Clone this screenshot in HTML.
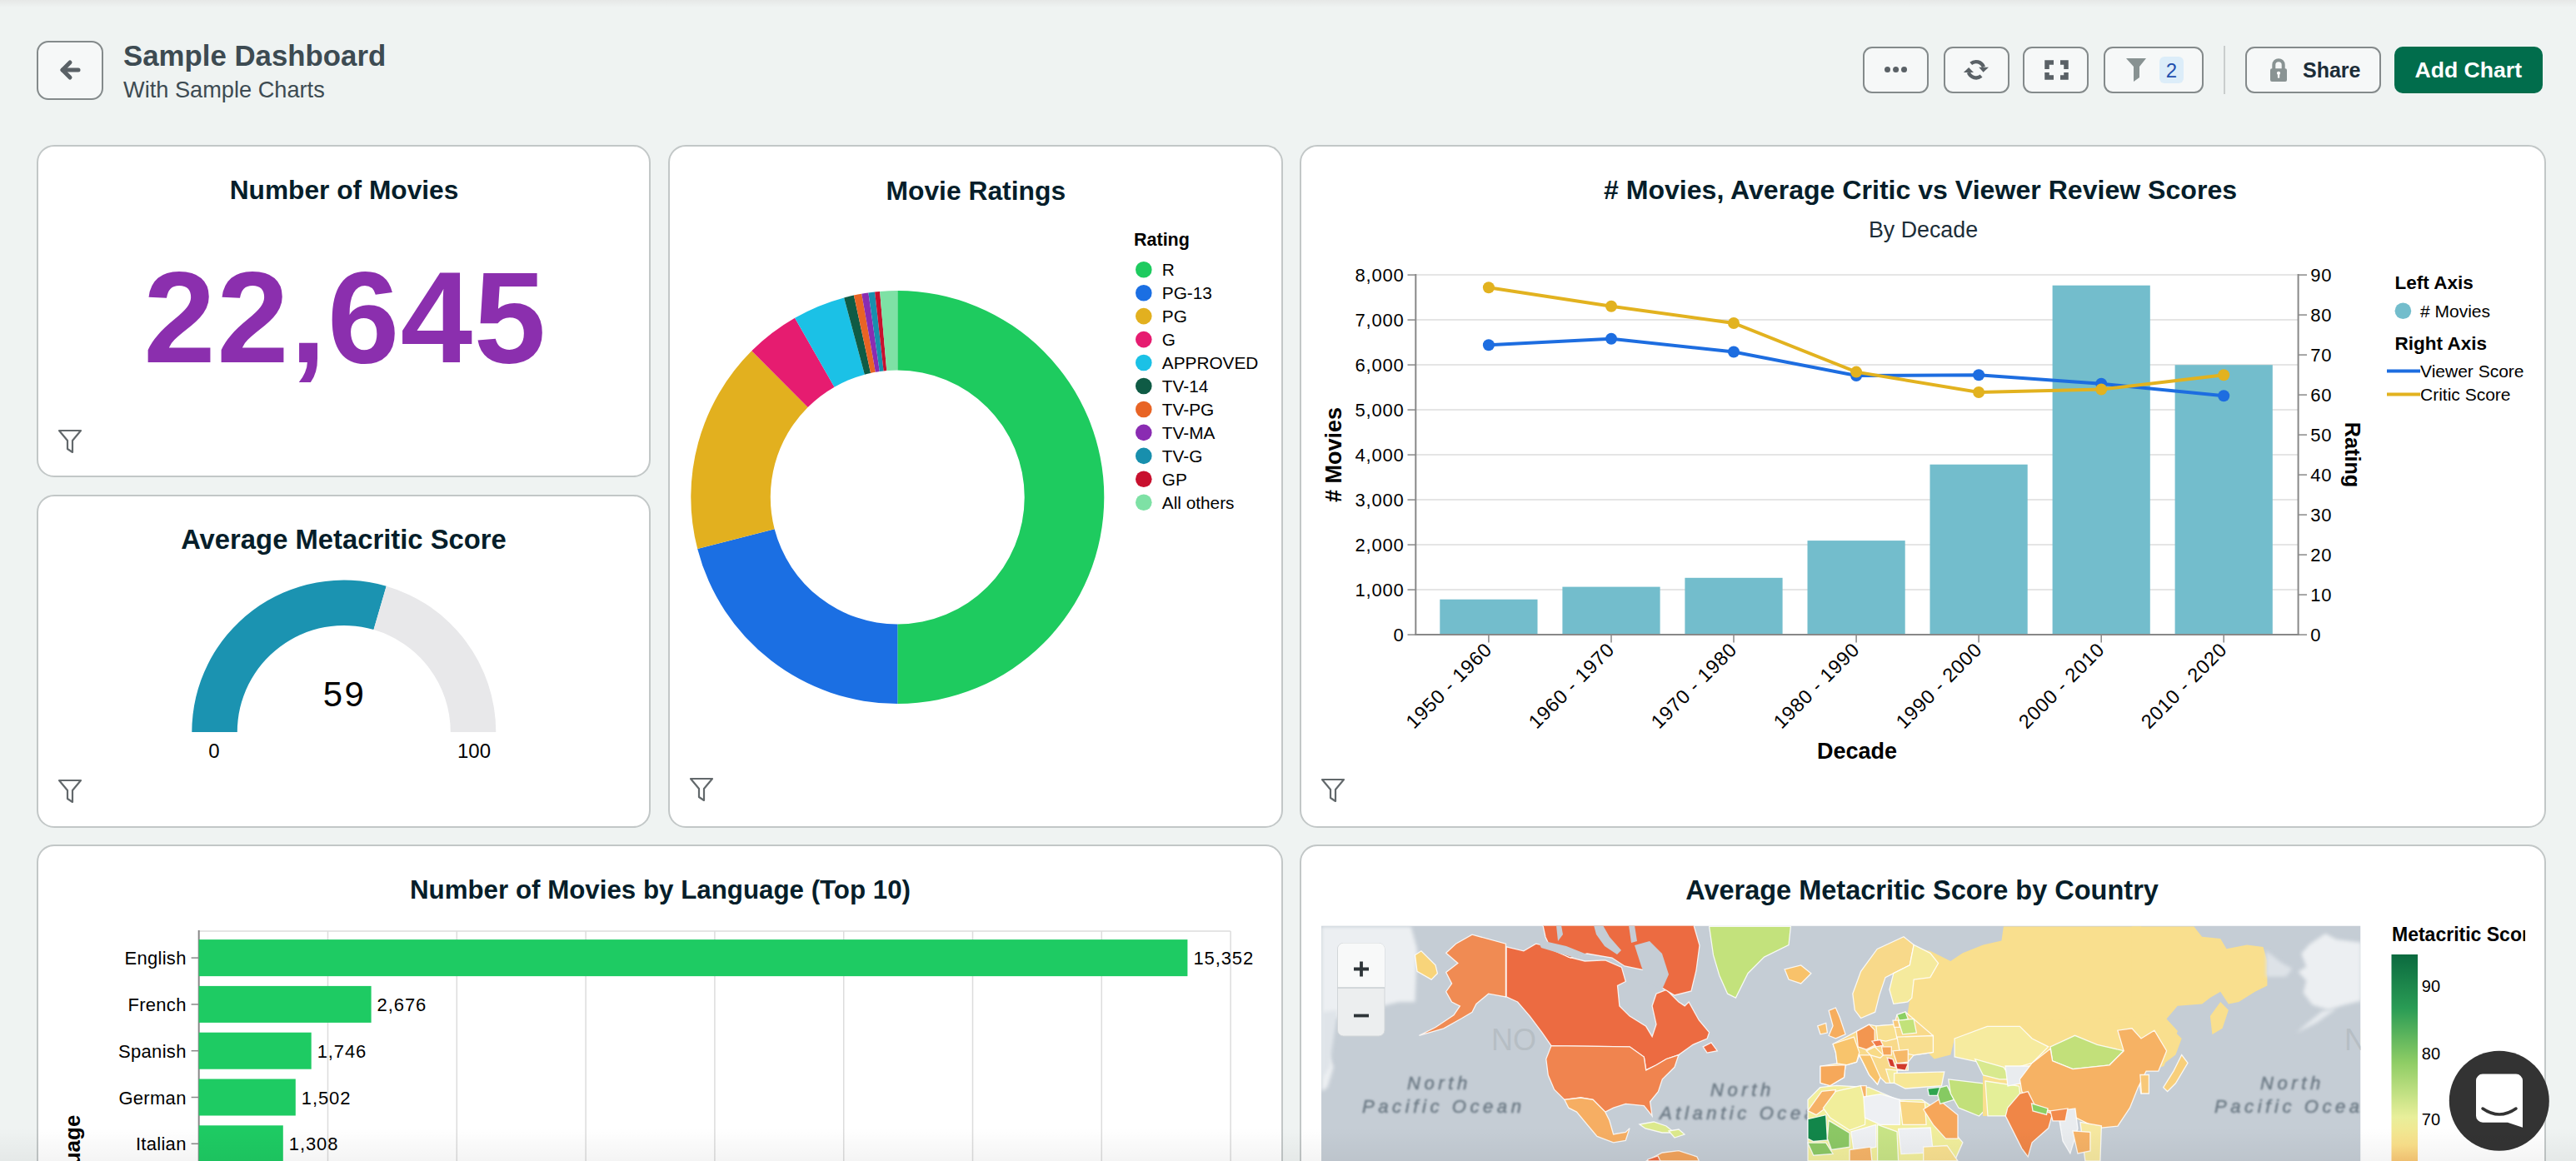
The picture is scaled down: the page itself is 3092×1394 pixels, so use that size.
<!DOCTYPE html>
<html><head><meta charset="utf-8"><title>Sample Dashboard</title>
<style>
html,body{margin:0;padding:0;}
body{width:3092px;height:1394px;overflow:hidden;background:#eff3f2;position:relative;font-family:"Liberation Sans",sans-serif;}
.topshade{position:absolute;left:0;top:0;width:3092px;height:9px;background:linear-gradient(#e6e8e7,#eff3f2);}
.card{position:absolute;background:#fff;border:2px solid #c2c7c7;border-radius:21px;box-sizing:border-box;}
.btn{position:absolute;box-sizing:border-box;border:2px solid #848a8b;border-radius:11px;background:#f6f8f8;}
svg.ov{position:absolute;left:0;top:0;}
</style></head><body>
<div class="topshade"></div>

<div class="btn" style="left:44px;top:49px;width:80px;height:71px;border-radius:14px;"></div>
<div style="position:absolute;left:148px;top:47px;font-size:34.8px;font-weight:bold;color:#3d4b52;white-space:nowrap;line-height:40px;">Sample Dashboard</div>
<div style="position:absolute;left:148px;top:91.7px;font-size:27.2px;color:#3d4b52;white-space:nowrap;line-height:32px;">With Sample Charts</div>
<div class="btn" style="left:2236px;top:56px;width:79px;height:56px;"></div>
<div class="btn" style="left:2333px;top:56px;width:79px;height:56px;"></div>
<div class="btn" style="left:2428px;top:56px;width:79px;height:56px;"></div>
<div class="btn" style="left:2525px;top:56px;width:120px;height:56px;"></div>
<div class="btn" style="left:2695px;top:56px;width:163px;height:56px;"></div>
<div style="position:absolute;left:2669px;top:55px;width:2px;height:58px;background:#c9cdcd;"></div>
<div style="position:absolute;left:2874px;top:56px;width:178px;height:56px;border-radius:10px;background:#016d4c;"></div>
<div style="position:absolute;left:2592px;top:68px;width:29px;height:32px;border-radius:6px;background:#dcedf9;"></div>
<div class="card" style="left:44px;top:174px;width:737px;height:399px;"></div>
<div class="card" style="left:44px;top:594px;width:737px;height:400px;"></div>
<div class="card" style="left:802px;top:174px;width:738px;height:820px;"></div>
<div class="card" style="left:1560px;top:174px;width:1496px;height:820px;"></div>
<div class="card" style="left:44px;top:1014px;width:1496px;height:500px;"></div>
<div class="card" style="left:1560px;top:1014px;width:1496px;height:500px;"></div>
<svg class="ov" width="3092" height="1394" font-family='"Liberation Sans", sans-serif'>
<path d="M75,84 L94,84" stroke="#5a6166" stroke-width="5" stroke-linecap="round" fill="none"/>
<path d="M84,75 L75,84 L84,93" stroke="#5a6166" stroke-width="5" stroke-linecap="round" stroke-linejoin="round" fill="none"/>
<circle cx="2265.5" cy="83.5" r="3.5" fill="#5a6166"/>
<circle cx="2275.6" cy="83.5" r="3.5" fill="#5a6166"/>
<circle cx="2285.5" cy="83.5" r="3.5" fill="#5a6166"/>
<path d="M2365.7,76.4 A9.6,9.6 0 0 1 2380.9,80.5" stroke="#5a6166" stroke-width="4.4" fill="none"/>
<path d="M2375.2,80.8 L2387,80.8 L2380.6,86.8 Z" fill="#5a6166"/>
<path d="M2378.1,91.15 A9.6,9.6 0 0 1 2362.9,87.1" stroke="#5a6166" stroke-width="4.4" fill="none"/>
<path d="M2356.9,87 L2369,87 L2363.1,81 Z" fill="#5a6166"/>
<path d="M2457,83 L2457,75 L2465,75 M2473,75 L2480,75 L2480,83 M2480,87 L2480,93 L2473,93 M2465,93 L2457,93 L2457,87" stroke="#5a6166" stroke-width="5.5" fill="none"/>
<path d="M2552,70 L2576,70 L2568,80 L2568,93 L2561,98 L2561,80 Z" fill="#889292"/>
<text x="2606.5" y="93" font-size="24" fill="#1f4fae" font-weight="normal" text-anchor="middle" >2</text>
<path d="M2729.3,83 L2729.3,77.8 A5.7,5.7 0 0 1 2740.7,77.8 L2740.7,83" stroke="#899393" stroke-width="4" fill="none"/>
<rect x="2725" y="82.3" width="20" height="15.7" rx="2" fill="#899393"/>
<circle cx="2735" cy="87.8" r="2.1" fill="#ffffff"/><rect x="2733.9" y="88" width="2.3" height="5.6" fill="#ffffff"/>
<text x="2764" y="93" font-size="25" fill="#1c2d38" font-weight="bold" text-anchor="start" >Share</text>
<text x="2898.5" y="93.2" font-size="26.6" fill="#ffffff" font-weight="bold" text-anchor="start" >Add Chart</text>
<path d="M71,517 L97,517 L87,529 L87,543 L81,539 L81,529 Z" stroke="#62686b" stroke-width="2.2" stroke-linejoin="round" fill="none"/>
<path d="M71,937 L97,937 L87,949 L87,963 L81,959 L81,949 Z" stroke="#62686b" stroke-width="2.2" stroke-linejoin="round" fill="none"/>
<path d="M829,935 L855,935 L845,947 L845,961 L839,957 L839,947 Z" stroke="#62686b" stroke-width="2.2" stroke-linejoin="round" fill="none"/>
<path d="M1587,936 L1613,936 L1603,948 L1603,962 L1597,958 L1597,948 Z" stroke="#62686b" stroke-width="2.2" stroke-linejoin="round" fill="none"/>
<text x="413" y="239" font-size="31.7" fill="#061e2a" font-weight="bold" text-anchor="middle" >Number of Movies</text>
<text x="414.5" y="435.2" font-size="155.3" fill="#8b2fae" font-weight="bold" text-anchor="middle" letter-spacing="1.6">22,645</text>
<text x="412.5" y="659" font-size="32.8" fill="#061e2a" font-weight="bold" text-anchor="middle" >Average Metacritic Score</text>
<path d="M230.30,879.00 A182.5,182.5 0 0 1 463.72,703.75 L448.51,756.08 A128,128 0 0 0 284.80,879.00 Z" fill="#1b93b1"/>
<path d="M463.72,703.75 A182.5,182.5 0 0 1 595.30,879.00 L540.80,879.00 A128,128 0 0 0 448.51,756.08 Z" fill="#e8e8ea"/>
<text x="413.5" y="848" font-size="42" fill="#000" font-weight="normal" text-anchor="middle" letter-spacing="2.5">59</text>
<text x="257" y="909.5" font-size="24" fill="#000" font-weight="normal" text-anchor="middle" >0</text>
<text x="569" y="909.5" font-size="24" fill="#000" font-weight="normal" text-anchor="middle" >100</text>
<text x="1171.3" y="239.5" font-size="31.8" fill="#061e2a" font-weight="bold" text-anchor="middle" >Movie Ratings</text>
<path d="M1077.30,349.00 A248,248 0 0 1 1077.30,845.00 L1077.30,749.50 A152.5,152.5 0 0 0 1077.30,444.50 Z" fill="#1ecb5f"/>
<path d="M1077.30,845.00 A248,248 0 0 1 837.20,659.09 L929.66,635.18 A152.5,152.5 0 0 0 1077.30,749.50 Z" fill="#1b6fe3"/>
<path d="M837.20,659.09 A248,248 0 0 1 902.24,421.33 L969.65,488.98 A152.5,152.5 0 0 0 929.66,635.18 Z" fill="#e2b01f"/>
<path d="M902.24,421.33 A248,248 0 0 1 954.05,381.79 L1001.51,464.67 A152.5,152.5 0 0 0 969.65,488.98 Z" fill="#e61c70"/>
<path d="M954.05,381.79 A248,248 0 0 1 1013.11,357.45 L1037.83,449.70 A152.5,152.5 0 0 0 1001.51,464.67 Z" fill="#1bc1e6"/>
<path d="M1013.11,357.45 A248,248 0 0 1 1024.89,354.60 L1045.07,447.94 A152.5,152.5 0 0 0 1037.83,449.70 Z" fill="#0f5b45"/>
<path d="M1024.89,354.60 A248,248 0 0 1 1034.24,352.77 L1050.82,446.82 A152.5,152.5 0 0 0 1045.07,447.94 Z" fill="#e86425"/>
<path d="M1034.24,352.77 A248,248 0 0 1 1042.36,351.47 L1055.81,446.02 A152.5,152.5 0 0 0 1050.82,446.82 Z" fill="#8a2cb2"/>
<path d="M1042.36,351.47 A248,248 0 0 1 1050.09,350.50 L1060.57,445.42 A152.5,152.5 0 0 0 1055.81,446.02 Z" fill="#188fad"/>
<path d="M1050.09,350.50 A248,248 0 0 1 1056.12,349.91 L1064.27,445.06 A152.5,152.5 0 0 0 1060.57,445.42 Z" fill="#c8102e"/>
<path d="M1056.12,349.91 A248,248 0 0 1 1077.30,349.00 L1077.30,444.50 A152.5,152.5 0 0 0 1064.27,445.06 Z" fill="#7ee1a5"/>
<text x="1361" y="295" font-size="21.5" fill="#000" font-weight="bold" text-anchor="start" >Rating</text>
<circle cx="1372.8" cy="323.7" r="9.8" fill="#1ecb5f"/>
<text x="1394.8" y="331.0" font-size="20.8" fill="#000" font-weight="normal" text-anchor="start" >R</text>
<circle cx="1372.8" cy="351.7" r="9.8" fill="#1b6fe3"/>
<text x="1394.8" y="359.0" font-size="20.8" fill="#000" font-weight="normal" text-anchor="start" >PG-13</text>
<circle cx="1372.8" cy="379.6" r="9.8" fill="#e2b01f"/>
<text x="1394.8" y="386.9" font-size="20.8" fill="#000" font-weight="normal" text-anchor="start" >PG</text>
<circle cx="1372.8" cy="407.6" r="9.8" fill="#e61c70"/>
<text x="1394.8" y="414.9" font-size="20.8" fill="#000" font-weight="normal" text-anchor="start" >G</text>
<circle cx="1372.8" cy="435.5" r="9.8" fill="#1bc1e6"/>
<text x="1394.8" y="442.8" font-size="20.8" fill="#000" font-weight="normal" text-anchor="start" >APPROVED</text>
<circle cx="1372.8" cy="463.5" r="9.8" fill="#0f5b45"/>
<text x="1394.8" y="470.8" font-size="20.8" fill="#000" font-weight="normal" text-anchor="start" >TV-14</text>
<circle cx="1372.8" cy="491.5" r="9.8" fill="#e86425"/>
<text x="1394.8" y="498.8" font-size="20.8" fill="#000" font-weight="normal" text-anchor="start" >TV-PG</text>
<circle cx="1372.8" cy="519.4" r="9.8" fill="#8a2cb2"/>
<text x="1394.8" y="526.7" font-size="20.8" fill="#000" font-weight="normal" text-anchor="start" >TV-MA</text>
<circle cx="1372.8" cy="547.4" r="9.8" fill="#188fad"/>
<text x="1394.8" y="554.7" font-size="20.8" fill="#000" font-weight="normal" text-anchor="start" >TV-G</text>
<circle cx="1372.8" cy="575.3" r="9.8" fill="#c8102e"/>
<text x="1394.8" y="582.6" font-size="20.8" fill="#000" font-weight="normal" text-anchor="start" >GP</text>
<circle cx="1372.8" cy="603.3" r="9.8" fill="#7ee1a5"/>
<text x="1394.8" y="610.6" font-size="20.8" fill="#000" font-weight="normal" text-anchor="start" >All others</text>
<text x="2305" y="239.2" font-size="32.1" fill="#061e2a" font-weight="bold" text-anchor="middle" ># Movies, Average Critic vs Viewer Review Scores</text>
<text x="2308.5" y="284.7" font-size="26.8" fill="#1c2d38" font-weight="normal" text-anchor="middle" >By Decade</text>
<line x1="1689.5" y1="762.1" x2="1699.3" y2="762.1" stroke="#888" stroke-width="1.5"/>
<text x="1685.5" y="769.9" font-size="22" fill="#000" font-weight="normal" text-anchor="end" letter-spacing="0.8">0</text>
<line x1="1699.3" y1="708.1" x2="2758.6" y2="708.1" stroke="#dcdcdc" stroke-width="1.5"/>
<line x1="1689.5" y1="708.1" x2="1699.3" y2="708.1" stroke="#888" stroke-width="1.5"/>
<text x="1685.5" y="715.9" font-size="22" fill="#000" font-weight="normal" text-anchor="end" letter-spacing="0.8">1,000</text>
<line x1="1699.3" y1="654.1" x2="2758.6" y2="654.1" stroke="#dcdcdc" stroke-width="1.5"/>
<line x1="1689.5" y1="654.1" x2="1699.3" y2="654.1" stroke="#888" stroke-width="1.5"/>
<text x="1685.5" y="661.9" font-size="22" fill="#000" font-weight="normal" text-anchor="end" letter-spacing="0.8">2,000</text>
<line x1="1699.3" y1="600.1" x2="2758.6" y2="600.1" stroke="#dcdcdc" stroke-width="1.5"/>
<line x1="1689.5" y1="600.1" x2="1699.3" y2="600.1" stroke="#888" stroke-width="1.5"/>
<text x="1685.5" y="607.9" font-size="22" fill="#000" font-weight="normal" text-anchor="end" letter-spacing="0.8">3,000</text>
<line x1="1699.3" y1="546.1" x2="2758.6" y2="546.1" stroke="#dcdcdc" stroke-width="1.5"/>
<line x1="1689.5" y1="546.1" x2="1699.3" y2="546.1" stroke="#888" stroke-width="1.5"/>
<text x="1685.5" y="553.9" font-size="22" fill="#000" font-weight="normal" text-anchor="end" letter-spacing="0.8">4,000</text>
<line x1="1699.3" y1="492.1" x2="2758.6" y2="492.1" stroke="#dcdcdc" stroke-width="1.5"/>
<line x1="1689.5" y1="492.1" x2="1699.3" y2="492.1" stroke="#888" stroke-width="1.5"/>
<text x="1685.5" y="499.9" font-size="22" fill="#000" font-weight="normal" text-anchor="end" letter-spacing="0.8">5,000</text>
<line x1="1699.3" y1="438.1" x2="2758.6" y2="438.1" stroke="#dcdcdc" stroke-width="1.5"/>
<line x1="1689.5" y1="438.1" x2="1699.3" y2="438.1" stroke="#888" stroke-width="1.5"/>
<text x="1685.5" y="445.9" font-size="22" fill="#000" font-weight="normal" text-anchor="end" letter-spacing="0.8">6,000</text>
<line x1="1699.3" y1="384.1" x2="2758.6" y2="384.1" stroke="#dcdcdc" stroke-width="1.5"/>
<line x1="1689.5" y1="384.1" x2="1699.3" y2="384.1" stroke="#888" stroke-width="1.5"/>
<text x="1685.5" y="391.9" font-size="22" fill="#000" font-weight="normal" text-anchor="end" letter-spacing="0.8">7,000</text>
<line x1="1699.3" y1="330.1" x2="2758.6" y2="330.1" stroke="#dcdcdc" stroke-width="1.5"/>
<line x1="1689.5" y1="330.1" x2="1699.3" y2="330.1" stroke="#888" stroke-width="1.5"/>
<text x="1685.5" y="337.9" font-size="22" fill="#000" font-weight="normal" text-anchor="end" letter-spacing="0.8">8,000</text>
<line x1="2758.6" y1="762.1" x2="2769" y2="762.1" stroke="#888" stroke-width="1.5"/>
<text x="2773.3" y="769.9" font-size="22" fill="#000" font-weight="normal" text-anchor="start" letter-spacing="0.8">0</text>
<line x1="2758.6" y1="714.1" x2="2769" y2="714.1" stroke="#888" stroke-width="1.5"/>
<text x="2773.3" y="721.9" font-size="22" fill="#000" font-weight="normal" text-anchor="start" letter-spacing="0.8">10</text>
<line x1="2758.6" y1="666.1" x2="2769" y2="666.1" stroke="#888" stroke-width="1.5"/>
<text x="2773.3" y="673.9" font-size="22" fill="#000" font-weight="normal" text-anchor="start" letter-spacing="0.8">20</text>
<line x1="2758.6" y1="618.1" x2="2769" y2="618.1" stroke="#888" stroke-width="1.5"/>
<text x="2773.3" y="625.9" font-size="22" fill="#000" font-weight="normal" text-anchor="start" letter-spacing="0.8">30</text>
<line x1="2758.6" y1="570.1" x2="2769" y2="570.1" stroke="#888" stroke-width="1.5"/>
<text x="2773.3" y="577.9" font-size="22" fill="#000" font-weight="normal" text-anchor="start" letter-spacing="0.8">40</text>
<line x1="2758.6" y1="522.1" x2="2769" y2="522.1" stroke="#888" stroke-width="1.5"/>
<text x="2773.3" y="529.9" font-size="22" fill="#000" font-weight="normal" text-anchor="start" letter-spacing="0.8">50</text>
<line x1="2758.6" y1="474.1" x2="2769" y2="474.1" stroke="#888" stroke-width="1.5"/>
<text x="2773.3" y="481.9" font-size="22" fill="#000" font-weight="normal" text-anchor="start" letter-spacing="0.8">60</text>
<line x1="2758.6" y1="426.1" x2="2769" y2="426.1" stroke="#888" stroke-width="1.5"/>
<text x="2773.3" y="433.9" font-size="22" fill="#000" font-weight="normal" text-anchor="start" letter-spacing="0.8">70</text>
<line x1="2758.6" y1="378.1" x2="2769" y2="378.1" stroke="#888" stroke-width="1.5"/>
<text x="2773.3" y="385.9" font-size="22" fill="#000" font-weight="normal" text-anchor="start" letter-spacing="0.8">80</text>
<line x1="2758.6" y1="330.1" x2="2769" y2="330.1" stroke="#888" stroke-width="1.5"/>
<text x="2773.3" y="337.9" font-size="22" fill="#000" font-weight="normal" text-anchor="start" letter-spacing="0.8">90</text>
<rect x="1728.3" y="719.7" width="117.2" height="42.4" fill="#73bdcc"/>
<line x1="1786.9" y1="762.1" x2="1786.9" y2="771.6" stroke="#888" stroke-width="1.5"/>
<text transform="translate(1787.9,777) rotate(-45)" font-size="23.5" letter-spacing="0.8" text-anchor="end" dominant-baseline="middle" fill="#000">1950 - 1960</text>
<rect x="1875.4" y="704.6" width="117.2" height="57.5" fill="#73bdcc"/>
<line x1="1934.0" y1="762.1" x2="1934.0" y2="771.6" stroke="#888" stroke-width="1.5"/>
<text transform="translate(1935.0,777) rotate(-45)" font-size="23.5" letter-spacing="0.8" text-anchor="end" dominant-baseline="middle" fill="#000">1960 - 1970</text>
<rect x="2022.4" y="693.8" width="117.2" height="68.3" fill="#73bdcc"/>
<line x1="2081.0" y1="762.1" x2="2081.0" y2="771.6" stroke="#888" stroke-width="1.5"/>
<text transform="translate(2082.0,777) rotate(-45)" font-size="23.5" letter-spacing="0.8" text-anchor="end" dominant-baseline="middle" fill="#000">1970 - 1980</text>
<rect x="2169.5" y="649.1" width="117.2" height="113.0" fill="#73bdcc"/>
<line x1="2228.1" y1="762.1" x2="2228.1" y2="771.6" stroke="#888" stroke-width="1.5"/>
<text transform="translate(2229.1,777) rotate(-45)" font-size="23.5" letter-spacing="0.8" text-anchor="end" dominant-baseline="middle" fill="#000">1980 - 1990</text>
<rect x="2316.5" y="557.7" width="117.2" height="204.4" fill="#73bdcc"/>
<line x1="2375.1" y1="762.1" x2="2375.1" y2="771.6" stroke="#888" stroke-width="1.5"/>
<text transform="translate(2376.1,777) rotate(-45)" font-size="23.5" letter-spacing="0.8" text-anchor="end" dominant-baseline="middle" fill="#000">1990 - 2000</text>
<rect x="2463.6" y="342.7" width="117.2" height="419.4" fill="#73bdcc"/>
<line x1="2522.2" y1="762.1" x2="2522.2" y2="771.6" stroke="#888" stroke-width="1.5"/>
<text transform="translate(2523.2,777) rotate(-45)" font-size="23.5" letter-spacing="0.8" text-anchor="end" dominant-baseline="middle" fill="#000">2000 - 2010</text>
<rect x="2610.6" y="438.2" width="117.2" height="323.9" fill="#73bdcc"/>
<line x1="2669.2" y1="762.1" x2="2669.2" y2="771.6" stroke="#888" stroke-width="1.5"/>
<text transform="translate(2670.2,777) rotate(-45)" font-size="23.5" letter-spacing="0.8" text-anchor="end" dominant-baseline="middle" fill="#000">2010 - 2020</text>
<line x1="1699.3" y1="329" x2="1699.3" y2="763.1" stroke="#888" stroke-width="2"/>
<line x1="2758.6" y1="329" x2="2758.6" y2="763.1" stroke="#888" stroke-width="2"/>
<line x1="1698.3" y1="762.1" x2="2759.6" y2="762.1" stroke="#888" stroke-width="2"/>
<polyline points="1786.9,414.2 1934.0,406.7 2081.0,422.5 2228.1,451 2375.1,450.3 2522.2,460.7 2669.2,475.3" stroke="#1d6de0" stroke-width="4" fill="none"/>
<circle cx="1786.9" cy="414.2" r="7" fill="#1d6de0"/>
<circle cx="1934.0" cy="406.7" r="7" fill="#1d6de0"/>
<circle cx="2081.0" cy="422.5" r="7" fill="#1d6de0"/>
<circle cx="2228.1" cy="451" r="7" fill="#1d6de0"/>
<circle cx="2375.1" cy="450.3" r="7" fill="#1d6de0"/>
<circle cx="2522.2" cy="460.7" r="7" fill="#1d6de0"/>
<circle cx="2669.2" cy="475.3" r="7" fill="#1d6de0"/>
<polyline points="1786.9,345.3 1934.0,367.7 2081.0,388 2228.1,446.6 2375.1,471 2522.2,467.5 2669.2,450.3" stroke="#e2b21f" stroke-width="4" fill="none"/>
<circle cx="1786.9" cy="345.3" r="7" fill="#e2b21f"/>
<circle cx="1934.0" cy="367.7" r="7" fill="#e2b21f"/>
<circle cx="2081.0" cy="388" r="7" fill="#e2b21f"/>
<circle cx="2228.1" cy="446.6" r="7" fill="#e2b21f"/>
<circle cx="2375.1" cy="471" r="7" fill="#e2b21f"/>
<circle cx="2522.2" cy="467.5" r="7" fill="#e2b21f"/>
<circle cx="2669.2" cy="450.3" r="7" fill="#e2b21f"/>
<text transform="translate(1610,546) rotate(-90)" font-size="27" font-weight="bold" text-anchor="middle" fill="#000">#&#160;Movies</text>
<text transform="translate(2815,546) rotate(90)" font-size="25.2" font-weight="bold" text-anchor="middle" fill="#000">Rating</text>
<text x="2229" y="911" font-size="27" fill="#000" font-weight="bold" text-anchor="middle" >Decade</text>
<text x="2874.5" y="347.4" font-size="22.5" fill="#000" font-weight="bold" text-anchor="start" >Left Axis</text>
<circle cx="2884.4" cy="373.2" r="9.8" fill="#73bdcc"/>
<text x="2905" y="380.5" font-size="21" fill="#000" font-weight="normal" text-anchor="start" ># Movies</text>
<text x="2874.5" y="419.7" font-size="22.5" fill="#000" font-weight="bold" text-anchor="start" >Right Axis</text>
<line x1="2865" y1="445.6" x2="2905" y2="445.6" stroke="#1d6de0" stroke-width="4"/>
<text x="2905" y="453" font-size="21" fill="#000" font-weight="normal" text-anchor="start" >Viewer Score</text>
<line x1="2865" y1="473.6" x2="2905" y2="473.6" stroke="#e2b21f" stroke-width="4"/>
<text x="2905" y="481" font-size="21" fill="#000" font-weight="normal" text-anchor="start" >Critic Score</text>
<text x="792.5" y="1079" font-size="31.3" fill="#061e2a" font-weight="bold" text-anchor="middle" >Number of Movies by Language (Top 10)</text>
<line x1="393.5" y1="1118" x2="393.5" y2="1400" stroke="#dcdcdc" stroke-width="1.5"/>
<line x1="548.3" y1="1118" x2="548.3" y2="1400" stroke="#dcdcdc" stroke-width="1.5"/>
<line x1="703.1" y1="1118" x2="703.1" y2="1400" stroke="#dcdcdc" stroke-width="1.5"/>
<line x1="857.9" y1="1118" x2="857.9" y2="1400" stroke="#dcdcdc" stroke-width="1.5"/>
<line x1="1012.7" y1="1118" x2="1012.7" y2="1400" stroke="#dcdcdc" stroke-width="1.5"/>
<line x1="1167.5" y1="1118" x2="1167.5" y2="1400" stroke="#dcdcdc" stroke-width="1.5"/>
<line x1="1322.3" y1="1118" x2="1322.3" y2="1400" stroke="#dcdcdc" stroke-width="1.5"/>
<line x1="1477.1" y1="1118" x2="1477.1" y2="1400" stroke="#dcdcdc" stroke-width="1.5"/>
<line x1="238.7" y1="1118" x2="1476.9" y2="1118" stroke="#dcdcdc" stroke-width="1.5"/>
<line x1="238.7" y1="1117" x2="238.7" y2="1400" stroke="#888" stroke-width="2"/>
<rect x="238.7" y="1128.1" width="1186.7" height="44" fill="#1ecb63"/>
<line x1="229.6" y1="1150.1" x2="238.7" y2="1150.1" stroke="#888" stroke-width="1.5"/>
<text x="223.7" y="1158.1" font-size="22" fill="#000" font-weight="normal" text-anchor="end" letter-spacing="0.3">English</text>
<text x="1432.4" y="1158.1" font-size="22" fill="#000" font-weight="normal" text-anchor="start" letter-spacing="0.9">15,352</text>
<rect x="238.7" y="1183.9" width="206.9" height="44" fill="#1ecb63"/>
<line x1="229.6" y1="1205.9" x2="238.7" y2="1205.9" stroke="#888" stroke-width="1.5"/>
<text x="223.7" y="1213.9" font-size="22" fill="#000" font-weight="normal" text-anchor="end" letter-spacing="0.3">French</text>
<text x="452.6" y="1213.9" font-size="22" fill="#000" font-weight="normal" text-anchor="start" letter-spacing="0.9">2,676</text>
<rect x="238.7" y="1239.7" width="135.0" height="44" fill="#1ecb63"/>
<line x1="229.6" y1="1261.7" x2="238.7" y2="1261.7" stroke="#888" stroke-width="1.5"/>
<text x="223.7" y="1269.7" font-size="22" fill="#000" font-weight="normal" text-anchor="end" letter-spacing="0.3">Spanish</text>
<text x="380.7" y="1269.7" font-size="22" fill="#000" font-weight="normal" text-anchor="start" letter-spacing="0.9">1,746</text>
<rect x="238.7" y="1295.5" width="116.1" height="44" fill="#1ecb63"/>
<line x1="229.6" y1="1317.5" x2="238.7" y2="1317.5" stroke="#888" stroke-width="1.5"/>
<text x="223.7" y="1325.5" font-size="22" fill="#000" font-weight="normal" text-anchor="end" letter-spacing="0.3">German</text>
<text x="361.8" y="1325.5" font-size="22" fill="#000" font-weight="normal" text-anchor="start" letter-spacing="0.9">1,502</text>
<rect x="238.7" y="1351.3" width="101.1" height="44" fill="#1ecb63"/>
<line x1="229.6" y1="1373.3" x2="238.7" y2="1373.3" stroke="#888" stroke-width="1.5"/>
<text x="223.7" y="1381.3" font-size="22" fill="#000" font-weight="normal" text-anchor="end" letter-spacing="0.3">Italian</text>
<text x="346.8" y="1381.3" font-size="22" fill="#000" font-weight="normal" text-anchor="start" letter-spacing="0.9">1,308</text>
<text transform="translate(96,1400) rotate(-90)" font-size="26" font-weight="bold" text-anchor="middle" fill="#000">Language</text>
<text x="2307" y="1079.6" font-size="32.5" fill="#061e2a" font-weight="bold" text-anchor="middle" >Average Metacritic Score by Country</text>
<defs><clipPath id="mapclip"><rect x="1586" y="1111.5" width="1247.5" height="300"/></clipPath><linearGradient id="cbar" x1="0" y1="0" x2="0" y2="1"><stop offset="0" stop-color="#0b6a3f"/><stop offset="0.25" stop-color="#2a9c55"/><stop offset="0.5" stop-color="#8fcd65"/><stop offset="0.75" stop-color="#e8ef9a"/><stop offset="0.88" stop-color="#fbe08a"/><stop offset="1" stop-color="#f8b868"/></linearGradient><filter id="blur1"><feGaussianBlur stdDeviation="0.8"/></filter><filter id="blur3" x="-20%" y="-20%" width="140%" height="140%"><feGaussianBlur stdDeviation="2"/></filter></defs>
<g clip-path="url(#mapclip)">
<rect x="1586" y="1111.5" width="1247.5" height="300" fill="#c5cdd5"/>
<text x="1689" y="1308" font-size="22" font-style="italic" letter-spacing="4.6" fill="#6f7d88" stroke="#6f7d88" stroke-width="0.6" filter="url(#blur1)">North</text>
<text x="1635" y="1336" font-size="22" font-style="italic" letter-spacing="4.6" fill="#6f7d88" stroke="#6f7d88" stroke-width="0.6" filter="url(#blur1)">Pacific Ocean</text>
<text x="2053" y="1315.5" font-size="22" font-style="italic" letter-spacing="4.6" fill="#6f7d88" stroke="#6f7d88" stroke-width="0.6" filter="url(#blur1)">North</text>
<text x="1992" y="1343.5" font-size="22" font-style="italic" letter-spacing="4.6" fill="#6f7d88" stroke="#6f7d88" stroke-width="0.6" filter="url(#blur1)">Atlantic Ocean</text>
<text x="2713" y="1308" font-size="22" font-style="italic" letter-spacing="4.6" fill="#6f7d88" stroke="#6f7d88" stroke-width="0.6" filter="url(#blur1)">North</text>
<text x="2658" y="1336" font-size="22" font-style="italic" letter-spacing="4.6" fill="#6f7d88" stroke="#6f7d88" stroke-width="0.6" filter="url(#blur1)">Pacific Ocean</text>
<polygon points="1586.0,1112.4 1693.6,1112.4 1701.0,1139.4 1698.5,1203.0 1679.0,1203.0 1659.4,1207.9 1634.9,1212.8 1600.7,1222.5 1593.3,1261.7 1600.7,1281.3 1593.3,1305.7 1586.0,1310.6" fill="#eceff2" filter="url(#blur3)"/>
<polygon points="1586.0,1215.2 1605.6,1212.8 1600.7,1247.0 1595.8,1281.3 1586.0,1295.9" fill="#dfe4e9" filter="url(#blur3)"/>
<polygon points="1698.5,1146.7 1705.9,1141.8 1723.0,1158.9 1725.4,1168.7 1718.1,1176.1 1701.0,1166.3" fill="#f8d47a" stroke="#ffffff" stroke-width="1.3" stroke-opacity="0.85"/>
<polygon points="1735.7,1144.3 1747.5,1133.2 1767.0,1122.2 1807.4,1133.2 1807.4,1196.9 1786.6,1193.2 1771.9,1205.4 1767.0,1215.2 1754.8,1222.5 1732.8,1234.8 1703.4,1243.3 1723.0,1233.5 1745.0,1218.9 1752.4,1207.9 1742.6,1203.0 1735.7,1190.7 1742.6,1180.9 1735.7,1167.5 1749.9,1156.5" fill="#f08b53" stroke="#ffffff" stroke-width="1.3" stroke-opacity="0.85"/>
<polygon points="1808.1,1136.9 1828.9,1141.8 1843.6,1133.2 1860.7,1136.9 1882.8,1149.1 1902.3,1154.0 1926.8,1152.8 1946.4,1161.4 1951.3,1178.5 1941.5,1183.4 1943.9,1207.9 1956.1,1220.1 1975.7,1232.3 1983.1,1244.6 1988.0,1229.9 1983.1,1207.9 1988.0,1193.2 2000.2,1188.3 2014.9,1203.0 2022.2,1207.9 2027.1,1203.0 2039.3,1225.0 2051.6,1239.7 2049.1,1247.0 2032.0,1254.3 2014.9,1266.6 2000.2,1271.5 1988.0,1278.8 1975.7,1284.9 1973.3,1269.0 1956.1,1256.8 1862.0,1255.6 1850.9,1239.7 1836.3,1220.1 1821.6,1203.0 1808.1,1196.9" fill="#ec6b41" stroke="#ffffff" stroke-width="1.3" stroke-opacity="0.85"/>
<polygon points="1852.0,1111.0 2033.0,1111.0 2040.0,1135.0 2036.0,1165.0 2030.0,1190.0 2010.0,1195.0 1985.0,1180.0 1975.0,1165.0 1950.0,1160.0 1935.0,1150.0 1905.0,1145.0 1885.0,1150.0 1862.0,1140.0 1855.0,1125.0" fill="#ec6b41" stroke="#ffffff" stroke-width="1.3" stroke-opacity="0.85"/>
<polygon points="1868.0,1111.0 1874.0,1111.0 1876.0,1122.0 1870.0,1130.0" fill="#c5cdd5"/>
<polygon points="1913.0,1111.0 1924.0,1111.0 1932.0,1125.0 1946.0,1141.0 1941.0,1146.0 1926.0,1136.0 1916.0,1122.0" fill="#c5cdd5"/>
<polygon points="1955.0,1111.0 1962.0,1111.0 1965.0,1130.0 1958.0,1132.0" fill="#c5cdd5"/>
<polygon points="1962.0,1135.0 1980.0,1130.0 1995.0,1145.0 2003.0,1170.0 1995.0,1188.0 1978.0,1180.0 1970.0,1160.0" fill="#c5cdd5"/>
<polygon points="1845.0,1128.0 1880.0,1136.0 1905.0,1146.0 1890.0,1150.0 1850.0,1138.0" fill="#c5cdd5"/>
<polygon points="2044.2,1256.8 2054.0,1251.9 2061.3,1261.7 2049.1,1264.1" fill="#ec6b41" stroke="#ffffff" stroke-width="1.3" stroke-opacity="0.85"/>
<polygon points="1862.0,1255.6 1956.1,1256.8 1973.3,1269.0 1975.7,1284.9 1988.0,1278.8 2000.2,1271.5 2014.9,1266.6 2010.0,1281.3 1995.3,1295.9 1990.4,1310.6 1980.6,1322.8 1983.1,1340.0 1973.3,1327.7 1951.3,1325.3 1936.6,1330.2 1926.8,1335.1 1912.1,1320.4 1897.4,1318.0 1877.9,1320.4 1865.6,1308.2 1858.3,1291.0 1855.8,1271.5" fill="#f0844f" stroke="#ffffff" stroke-width="1.3" stroke-opacity="0.85"/>
<polygon points="1877.9,1320.4 1897.4,1318.0 1912.1,1320.4 1926.8,1335.1 1931.7,1344.9 1936.6,1362.0 1951.3,1359.5 1956.1,1354.6 1951.3,1369.3 1936.6,1371.8 1917.0,1364.4 1904.8,1349.8 1892.5,1335.1 1882.8,1330.2" fill="#f6ae63" stroke="#ffffff" stroke-width="1.3" stroke-opacity="0.85"/>
<polygon points="1975.7,1394.0 1995.3,1384.0 2014.9,1381.6 2036.9,1388.9 2039.3,1394.0" fill="#f2a35c" stroke="#ffffff" stroke-width="1.3" stroke-opacity="0.85"/>
<polygon points="1968.0,1350.0 1985.0,1347.0 2000.0,1352.0 2010.0,1360.0 1995.0,1360.0 1975.0,1355.0" fill="#dce98c" stroke="#ffffff" stroke-width="1.3" stroke-opacity="0.85"/>
<polygon points="2003.0,1358.0 2015.0,1356.0 2022.0,1362.0 2010.0,1366.0" fill="#dce98c" stroke="#ffffff" stroke-width="1.3" stroke-opacity="0.85"/>
<polygon points="1978.0,1392.0 1990.0,1388.0 1993.0,1394.0 1978.0,1394.0" fill="#ee6a3f" stroke="#ffffff" stroke-width="1.3" stroke-opacity="0.85"/>
<polygon points="2051.6,1112.4 2149.4,1112.4 2147.0,1134.5 2117.6,1149.1 2098.0,1168.7 2083.4,1198.1 2073.6,1193.2 2063.8,1171.2 2056.5,1146.7" fill="#c3e27c" stroke="#ffffff" stroke-width="1.3" stroke-opacity="0.85"/>
<polygon points="2142.1,1163.8 2161.7,1158.9 2173.9,1168.7 2161.7,1180.9 2147.0,1176.1" fill="#f8c26a" stroke="#ffffff" stroke-width="1.3" stroke-opacity="0.85"/>
<polygon points="2292.3,1136.9 2316.8,1141.8 2341.3,1154.0 2355.9,1144.3 2380.4,1134.5 2402.4,1129.6 2404.9,1112.4 2570.0,1112.4 2570.0,1237.2 2551.7,1239.7 2541.9,1256.8 2507.6,1247.0 2490.5,1243.3 2461.1,1256.8 2439.1,1247.0 2424.4,1232.3 2404.9,1229.9 2385.3,1232.3 2360.8,1247.0 2346.1,1247.0 2341.3,1266.6 2321.7,1271.5 2307.0,1256.8 2292.3,1247.0 2289.9,1215.2 2294.8,1183.4 2299.7,1158.9" fill="#f9df8e"/>
<polygon points="2558.8,1112.4 2633.4,1112.4 2643.1,1124.7 2665.2,1127.1 2672.5,1139.3 2697.0,1134.5 2716.5,1136.9 2721.4,1154.0 2721.4,1183.4 2706.7,1190.7 2687.2,1202.9 2674.9,1205.4 2665.2,1190.7 2652.9,1198.0 2643.1,1205.4 2613.8,1207.8 2599.1,1224.9 2608.9,1237.2 2618.7,1247.0 2611.4,1266.5 2591.8,1281.2 2584.5,1264.1 2569.8,1242.1 2558.8,1237.2" fill="#f9df8e"/>
<polygon points="2652.9,1220.1 2665.2,1202.9 2674.9,1212.7 2667.6,1234.7 2655.4,1242.1" fill="#f9df8e"/>
<polygon points="2771.9,1134.1 2791.2,1120.9 2804.4,1128.1 2834.0,1131.7 2834.0,1201.7 2814.1,1206.5 2794.8,1212.5 2775.5,1206.5 2764.6,1192.0 2768.3,1177.6 2758.6,1166.7 2768.3,1160.7 2762.2,1145.0" fill="#eceff2" filter="url(#blur3)"/>
<polygon points="2787.6,1213.7 2804.4,1211.3 2780.3,1228.2 2756.2,1240.3 2768.3,1229.4" fill="#e6eaee" filter="url(#blur3)"/>
<polygon points="2720.0,1141.4 2738.1,1155.8 2751.4,1163.1 2744.1,1172.7 2720.0,1172.7" fill="#dde2e7" filter="url(#blur3)"/>
<polygon points="2596.7,1305.6 2608.9,1286.1 2618.7,1266.5 2626.0,1276.3 2611.4,1300.8 2601.6,1310.5" fill="#f8cf7a" stroke="#ffffff" stroke-width="1.3" stroke-opacity="0.85"/>
<polygon points="2567.3,1295.9 2577.1,1291.0 2577.1,1310.5 2569.8,1313.0" fill="#f8cf7a" stroke="#ffffff" stroke-width="1.3" stroke-opacity="0.85"/>
<polygon points="2223.8,1193.2 2233.6,1166.3 2253.2,1139.4 2285.0,1124.7 2297.2,1134.5 2292.3,1158.9 2272.8,1168.7 2263.0,1173.6 2255.6,1195.6 2250.7,1215.2 2233.6,1222.5 2226.3,1212.8" fill="#f8d98a" stroke="#ffffff" stroke-width="1.3" stroke-opacity="0.85"/>
<polygon points="2272.8,1168.7 2292.3,1158.9 2297.2,1134.5 2316.8,1144.3 2326.6,1156.5 2316.8,1173.6 2297.2,1176.1 2294.8,1198.1 2289.9,1203.0 2272.8,1205.4 2267.9,1188.3" fill="#f5ea9d" stroke="#ffffff" stroke-width="1.3" stroke-opacity="0.85"/>
<polygon points="2170.0,1320.4 2184.7,1305.7 2204.3,1303.3 2243.4,1305.7 2277.6,1320.4 2307.0,1320.4 2321.7,1330.2 2341.3,1354.6 2355.9,1371.8 2346.1,1394.0 2170.0,1394.0" fill="#f1ee9c" stroke="#ffffff" stroke-width="1.3" stroke-opacity="0.85"/>
<polygon points="2200.1,1253.5 2228.5,1238.4 2243.5,1230.1 2251.9,1231.8 2273.6,1230.1 2277.0,1218.4 2287.0,1215.0 2297.0,1223.4 2320.4,1243.5 2320.4,1263.5 2297.0,1266.9 2290.3,1275.2 2290.3,1285.2 2277.0,1285.2 2277.0,1300.3 2263.6,1300.3 2256.9,1293.6 2253.6,1302.0 2243.5,1290.3 2236.9,1276.9 2231.8,1266.9 2228.5,1275.2 2216.8,1278.6 2215.1,1278.6 2213.5,1293.6 2196.7,1303.6 2185.0,1300.3 2185.0,1280.2 2205.1,1276.9 2203.4,1263.5" fill="#f8d98a" stroke="#ffffff" stroke-width="1.3" stroke-opacity="0.85"/>
<polygon points="2181.7,1231.8 2191.7,1228.4 2193.4,1240.1 2185.0,1241.8" fill="#f8c06e" stroke="#ffffff" stroke-width="1.3" stroke-opacity="0.85"/>
<polygon points="2195.1,1213.4 2203.4,1210.0 2208.4,1221.7 2215.1,1241.8 2203.4,1246.8 2195.1,1243.5 2200.1,1231.8" fill="#f6ad5e" stroke="#ffffff" stroke-width="1.3" stroke-opacity="0.85"/>
<polygon points="2200.1,1253.5 2225.2,1245.1 2231.8,1263.5 2228.5,1275.2 2216.8,1278.6 2205.1,1276.9 2203.4,1263.5" fill="#f8c46c" stroke="#ffffff" stroke-width="1.3" stroke-opacity="0.85"/>
<polygon points="2185.0,1280.2 2215.1,1278.6 2213.5,1293.6 2196.7,1303.6 2185.0,1300.3" fill="#f6a85a" stroke="#ffffff" stroke-width="1.3" stroke-opacity="0.85"/>
<polygon points="2251.9,1231.8 2273.6,1230.1 2277.0,1246.8 2263.6,1250.1 2253.6,1248.5" fill="#f8e08f" stroke="#ffffff" stroke-width="1.3" stroke-opacity="0.85"/>
<polygon points="2228.5,1238.4 2243.5,1230.1 2250.2,1236.8 2250.2,1255.2 2240.2,1260.2 2230.2,1256.8" fill="#f39650" stroke="#ffffff" stroke-width="1.3" stroke-opacity="0.85"/>
<polygon points="2246.9,1250.1 2256.9,1248.5 2260.3,1255.2 2251.9,1256.8" fill="#f07a48" stroke="#ffffff" stroke-width="1.3" stroke-opacity="0.85"/>
<polygon points="2258.6,1256.8 2270.3,1256.8 2270.3,1266.9 2260.3,1266.9" fill="#f4a458" stroke="#ffffff" stroke-width="1.3" stroke-opacity="0.85"/>
<polygon points="2250.2,1256.8 2260.3,1266.9 2256.9,1270.2 2245.2,1266.9 2240.2,1261.8" fill="#f8da86" stroke="#ffffff" stroke-width="1.3" stroke-opacity="0.85"/>
<polygon points="2277.0,1218.4 2287.0,1215.0 2290.3,1223.4 2280.3,1226.7" fill="#8ccf62" stroke="#ffffff" stroke-width="1.3" stroke-opacity="0.85"/>
<polygon points="2272.0,1225.1 2278.6,1225.1 2280.3,1233.4 2273.6,1233.4" fill="#f8c878" stroke="#ffffff" stroke-width="1.3" stroke-opacity="0.85"/>
<polygon points="2278.6,1225.1 2297.0,1223.4 2300.4,1240.1 2283.7,1241.8" fill="#c2e27a" stroke="#ffffff" stroke-width="1.3" stroke-opacity="0.85"/>
<polygon points="2277.0,1245.1 2320.4,1243.5 2320.4,1263.5 2297.0,1266.9 2280.3,1263.5" fill="#f8de90" stroke="#ffffff" stroke-width="1.3" stroke-opacity="0.85"/>
<polygon points="2272.0,1261.8 2290.3,1260.2 2290.3,1275.2 2277.0,1276.9" fill="#f6b868" stroke="#ffffff" stroke-width="1.3" stroke-opacity="0.85"/>
<polygon points="2231.8,1266.9 2245.2,1266.9 2256.9,1293.6 2253.6,1302.0 2243.5,1290.3 2236.9,1276.9" fill="#f8c26a" stroke="#ffffff" stroke-width="1.3" stroke-opacity="0.85"/>
<polygon points="2265.3,1270.2 2272.0,1271.9 2275.3,1281.9 2268.6,1280.2" fill="#d23a2b" stroke="#ffffff" stroke-width="1.3" stroke-opacity="0.85"/>
<polygon points="2275.3,1276.9 2290.3,1276.9 2287.0,1285.2 2277.0,1283.6" fill="#d23a2b" stroke="#ffffff" stroke-width="1.3" stroke-opacity="0.85"/>
<polygon points="2263.6,1283.6 2277.0,1285.2 2277.0,1300.3 2268.6,1300.3" fill="#f4ec9f" stroke="#ffffff" stroke-width="1.3" stroke-opacity="0.85"/>
<polygon points="2273.6,1288.6 2333.8,1286.9 2330.5,1303.6 2287.0,1307.0 2273.6,1300.3" fill="#f7e796" stroke="#ffffff" stroke-width="1.3" stroke-opacity="0.85"/>
<polygon points="2170.0,1333.7 2186.7,1310.3 2203.4,1308.6 2200.1,1323.7 2180.0,1338.7" fill="#f6b266" stroke="#ffffff" stroke-width="1.3" stroke-opacity="0.85"/>
<polygon points="2188.4,1330.4 2203.4,1310.3 2233.5,1303.6 2240.2,1317.0 2238.5,1350.4 2220.1,1357.1 2196.7,1342.1" fill="#f1ee9b" stroke="#ffffff" stroke-width="1.3" stroke-opacity="0.85"/>
<polygon points="2233.5,1303.6 2240.2,1303.6 2240.2,1320.3 2236.9,1317.0" fill="#f6b266" stroke="#ffffff" stroke-width="1.3" stroke-opacity="0.85"/>
<polygon points="2236.9,1317.0 2256.9,1313.7 2280.3,1320.3 2280.3,1350.4 2256.9,1350.4 2238.5,1342.1" fill="#eef0f3" stroke="#ffffff" stroke-width="1.3" stroke-opacity="0.85"/>
<polygon points="2280.3,1322.0 2310.4,1323.7 2312.1,1350.4 2283.7,1350.4" fill="#f8d582" stroke="#ffffff" stroke-width="1.3" stroke-opacity="0.85"/>
<polygon points="2170.0,1343.7 2191.7,1338.7 2193.4,1368.8 2176.7,1370.5 2170.0,1367.1" fill="#12864a" stroke="#ffffff" stroke-width="1.3" stroke-opacity="0.85"/>
<polygon points="2195.1,1345.4 2220.1,1360.5 2220.1,1377.2 2198.4,1380.5 2193.4,1367.1" fill="#8cc865" stroke="#ffffff" stroke-width="1.3" stroke-opacity="0.85"/>
<polygon points="2170.0,1372.2 2191.7,1372.2 2200.1,1385.5 2176.7,1387.2" fill="#8cc865" stroke="#ffffff" stroke-width="1.3" stroke-opacity="0.85"/>
<polygon points="2221.8,1358.8 2251.9,1350.4 2251.9,1377.2 2225.2,1382.2" fill="#eef0f3" stroke="#ffffff" stroke-width="1.3" stroke-opacity="0.85"/>
<polygon points="2253.6,1350.4 2277.0,1358.8 2278.6,1394.0 2253.6,1394.0" fill="#c8e486" stroke="#ffffff" stroke-width="1.3" stroke-opacity="0.85"/>
<polygon points="2278.6,1355.4 2317.1,1353.8 2320.4,1383.9 2282.0,1385.5" fill="#eef0f3" stroke="#ffffff" stroke-width="1.3" stroke-opacity="0.85"/>
<polygon points="2220.1,1380.5 2245.2,1377.2 2246.9,1394.0 2220.1,1394.0" fill="#f6b468" stroke="#ffffff" stroke-width="1.3" stroke-opacity="0.85"/>
<polygon points="2308.7,1332.0 2327.1,1320.3 2350.0,1338.7 2350.0,1367.1 2335.5,1367.1 2320.4,1350.4" fill="#f6a65a" stroke="#ffffff" stroke-width="1.3" stroke-opacity="0.85"/>
<polygon points="2308.7,1377.2 2337.1,1375.5 2350.0,1394.0 2308.7,1394.0" fill="#f8e090" stroke="#ffffff" stroke-width="1.3" stroke-opacity="0.85"/>
<polygon points="2323.8,1307.0 2337.1,1303.6 2345.5,1320.3 2328.8,1325.4" fill="#86ca62" stroke="#ffffff" stroke-width="1.3" stroke-opacity="0.85"/>
<polygon points="2313.7,1307.0 2328.8,1305.3 2325.4,1315.3 2315.4,1315.3" fill="#2ea54f" stroke="#ffffff" stroke-width="1.3" stroke-opacity="0.85"/>
<polygon points="2338.8,1295.9 2380.4,1300.8 2385.3,1330.2 2375.5,1340.0 2351.0,1330.2 2341.3,1313.1" fill="#c2e07a" stroke="#ffffff" stroke-width="1.3" stroke-opacity="0.85"/>
<polygon points="2380.0,1227.5 2597.4,1220.0 2613.9,1238.0 2597.4,1280.0 2574.9,1287.5 2556.9,1324.9 2541.9,1351.9 2517.9,1354.9 2484.9,1339.9 2464.0,1336.9 2444.5,1327.9 2434.0,1389.4 2407.0,1339.9 2380.0,1339.9" fill="#f9df8e"/>
<polygon points="2346.1,1247.0 2385.3,1232.3 2424.4,1232.3 2439.1,1247.0 2458.7,1256.8 2439.1,1276.4 2404.9,1286.1 2380.4,1276.4 2346.1,1269.0" fill="#f6eb9f" stroke="#ffffff" stroke-width="1.3" stroke-opacity="0.85"/>
<polygon points="2370.6,1271.5 2404.9,1281.3 2414.6,1295.9 2400.0,1295.9 2380.4,1291.0" fill="#d8e98e" stroke="#ffffff" stroke-width="1.3" stroke-opacity="0.85"/>
<polygon points="2383.0,1298.0 2423.5,1304.0 2425.0,1316.0 2410.0,1339.9 2386.0,1339.9" fill="#e4ef98" stroke="#ffffff" stroke-width="1.3" stroke-opacity="0.85"/>
<polygon points="2407.0,1280.0 2437.0,1280.0 2425.0,1301.0 2410.0,1304.0" fill="#e9ecef" stroke="#ffffff" stroke-width="1.3" stroke-opacity="0.85"/>
<polygon points="2461.1,1256.8 2490.5,1243.3 2517.4,1254.3 2549.2,1261.7 2532.1,1278.8 2488.0,1283.7 2463.6,1273.9" fill="#c2e07a" stroke="#ffffff" stroke-width="1.3" stroke-opacity="0.85"/>
<polygon points="2424.4,1295.9 2439.1,1276.4 2461.1,1259.2 2463.6,1273.9 2488.0,1283.7 2532.1,1278.8 2549.2,1261.7 2541.9,1237.2 2559.0,1234.8 2570.0,1247.0 2585.9,1237.2 2600.6,1261.7 2590.8,1286.1 2576.1,1286.1 2566.3,1305.7 2556.5,1330.2 2541.9,1352.2 2517.4,1354.6 2488.0,1340.0 2463.6,1335.1 2439.1,1325.3 2426.9,1310.6" fill="#f6b264" stroke="#ffffff" stroke-width="1.3" stroke-opacity="0.85"/>
<polygon points="2409.8,1330.2 2424.4,1313.1 2434.2,1310.6 2444.0,1330.2 2463.6,1337.5 2458.7,1354.6 2439.1,1371.8 2434.2,1388.9 2426.9,1379.1 2414.6,1354.6 2407.3,1340.0" fill="#f08647" stroke="#ffffff" stroke-width="1.3" stroke-opacity="0.85"/>
<polygon points="2470.0,1333.9 2490.9,1330.9 2493.9,1354.9 2484.9,1384.9 2476.0,1369.9" fill="#e9ecef" stroke="#ffffff" stroke-width="1.3" stroke-opacity="0.85"/>
<polygon points="2461.0,1333.9 2481.9,1330.9 2479.0,1345.9 2464.0,1345.9" fill="#f28a4c" stroke="#ffffff" stroke-width="1.3" stroke-opacity="0.85"/>
<polygon points="2496.9,1347.4 2522.4,1351.9 2520.9,1394.1 2502.9,1394.1" fill="#f6e8a0" stroke="#ffffff" stroke-width="1.3" stroke-opacity="0.85"/>
<polygon points="2487.9,1357.9 2508.9,1359.4 2508.9,1381.9 2493.9,1384.9" fill="#f6b266" stroke="#ffffff" stroke-width="1.3" stroke-opacity="0.85"/>
<polygon points="2438.5,1324.9 2458.0,1330.9 2456.5,1338.4 2440.0,1333.9" fill="#8ccf62" stroke="#ffffff" stroke-width="1.3" stroke-opacity="0.85"/>
<polygon points="2568.9,1290.5 2579.4,1290.5 2579.4,1313.0 2570.4,1313.0" fill="#f8c878" stroke="#ffffff" stroke-width="1.3" stroke-opacity="0.85"/>
<text x="1790" y="1261" font-size="36" fill="#b3bac0" fill-opacity="0.8">NO</text>
<text x="2814" y="1261" font-size="36" fill="#b3bac0" fill-opacity="0.8">N</text>
</g>
<rect x="1605.5" y="1132.5" width="56.5" height="111.5" rx="7" fill="#eceeef" stroke="#d2d6d9" stroke-width="1"/>
<path d="M1606,1186 L1606,1139.5 A7,7 0 0 1 1613,1132.5 L1655,1132.5 A7,7 0 0 1 1662,1139.5 L1662,1186 Z" fill="#f8f9f9"/>
<line x1="1605.5" y1="1186" x2="1662" y2="1186" stroke="#c9ced2" stroke-width="1.5"/>
<path d="M1625,1163.5 L1643,1163.5 M1634,1154.5 L1634,1172.5" stroke="#2d3438" stroke-width="3.8"/>
<path d="M1625,1219.5 L1643,1219.5" stroke="#2d3438" stroke-width="3.8"/>
<svg x="2860" y="1100" width="171" height="60"><text x="11" y="30" font-size="23" font-weight="bold" fill="#000">Metacritic Score</text></svg>
<rect x="2870.5" y="1146" width="31.5" height="260" fill="url(#cbar)"/>
<text x="2906.8" y="1191.4" font-size="20" fill="#000" font-weight="normal" text-anchor="start" >90</text>
<text x="2906.8" y="1271.5" font-size="20" fill="#000" font-weight="normal" text-anchor="start" >80</text>
<text x="2906.8" y="1351.2" font-size="20" fill="#000" font-weight="normal" text-anchor="start" >70</text>
<circle cx="2999.8" cy="1321.7" r="60" fill="#333333"/>
<path d="M2980,1289.6 L3020,1289.6 A8,8 0 0 1 3028,1297.6 L3028,1353.7 L3010,1347.7 L2980,1347.7 A8,8 0 0 1 2972,1339.7 L2972,1297.6 A8,8 0 0 1 2980,1289.6 Z" fill="#ffffff"/>
<path d="M2980,1331 Q3000,1345 3020,1331" stroke="#333333" stroke-width="3.5" fill="none" stroke-linecap="round"/>
</svg>
<div style="position:absolute;left:0;top:1354px;width:3092px;height:40px;background:linear-gradient(rgba(0,0,0,0),rgba(0,0,0,0.045));"></div>
</body></html>
